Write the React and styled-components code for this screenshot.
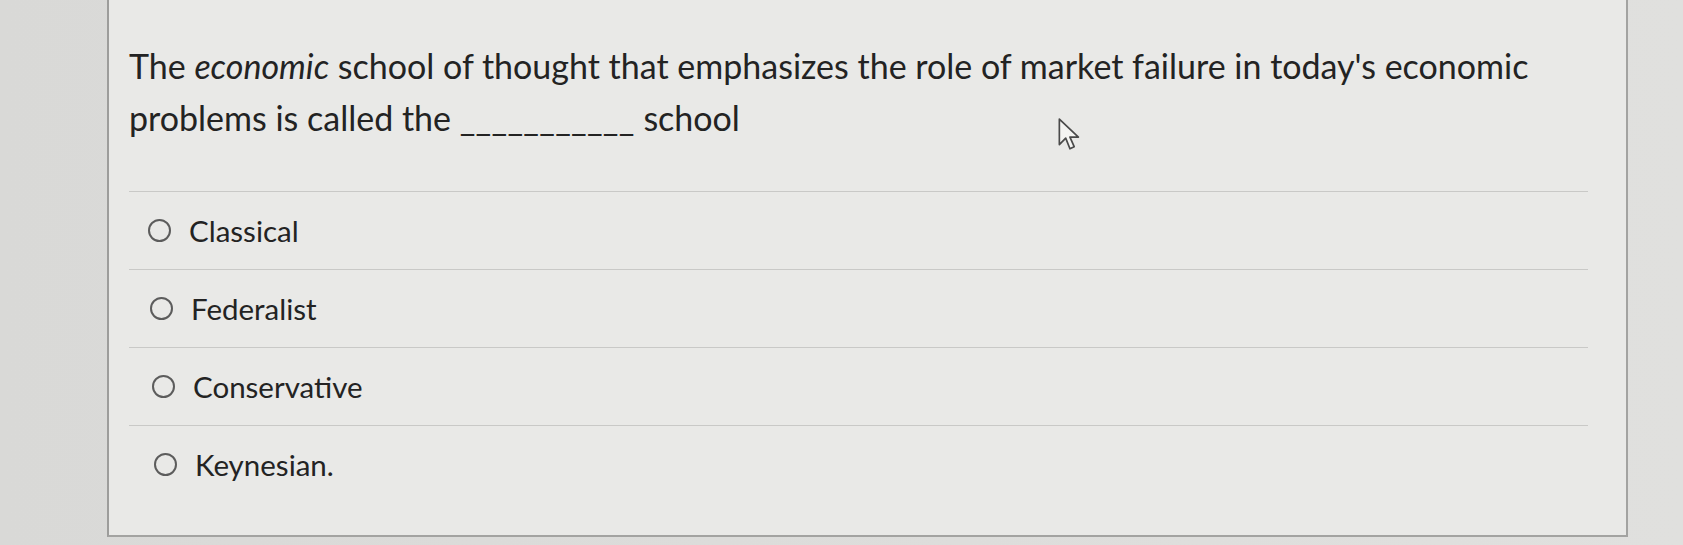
import React from 'react';
import styled, { createGlobalStyle } from 'styled-components';

const GlobalStyle = createGlobalStyle`
  html, body {
    margin: 0;
    padding: 0;
    background: #dcdcda;
  }
  body {
    font-family: Lato, "Open Sans", "Liberation Sans", sans-serif;
    overflow: hidden;
  }
`;

const Page = styled.div`
  width: 1683px;
  height: 545px;
  padding-left: 107px;
  box-sizing: border-box;
  background: linear-gradient(90deg, #d9d9d7 0%, #e0e0de 100%);
`;

const Card = styled.div`
  position: relative;
  width: 1521px;
  height: 537px;
  box-sizing: border-box;
  background: #e9e9e7;
  border-left: 2px solid #9d9d9b;
  border-right: 2px solid #a3a3a1;
  border-bottom: 2px solid #a3a3a1;
  padding: 40px 38px 0 20px;
`;

const Question = styled.div`
  font-size: 34px;
  line-height: 52px;
  color: #232323;
  margin: 0 0 47px;
  white-space: nowrap;
`;

const Blank = styled.span`
  letter-spacing: 0.3px;
`;

const Answers = styled.div`
  display: flex;
  flex-direction: column;
`;

const Option = styled.label`
  display: flex;
  align-items: center;
  height: 77px;
  border-top: 1px solid #c9c9c7;
  padding-left: ${p => p.$indent}px;
  font-size: 29.5px;
  color: #232323;
  cursor: pointer;
`;

const Radio = styled.span`
  width: 19px;
  height: 19px;
  border: 2px solid #5c5c5c;
  border-radius: 50%;
  margin-right: 18px;
  flex-shrink: 0;
`;

const Cursor = styled.svg`
  position: absolute;
  left: 948px;
  top: 117px;
`;

const options = ['Classical', 'Federalist', 'Conservative', 'Keynesian.'];

export default function App() {
  return (
    <>
      <GlobalStyle />
      <Page>
        <Card>
          <Question>
            The <em>economic</em> school of thought that emphasizes the role of market failure in today's economic
            <br />
            problems is called the <Blank>___________</Blank> school
          </Question>
          <Answers>
            {options.map((o, i) => (
              <Option key={o} $indent={19 + i * 2}>
                <Radio />
                {o}
              </Option>
            ))}
          </Answers>
          <Cursor width="28" height="36" viewBox="0 0 26 34">
            <path
              d="M2 2 L2 26 L8 20 L12 30 L16 28 L12 19 L20 19 Z"
              fill="#f4f4f2"
              stroke="#4a4a4a"
              strokeWidth="1.6"
              strokeLinejoin="round"
            />
          </Cursor>
        </Card>
      </Page>
    </>
  );
}
